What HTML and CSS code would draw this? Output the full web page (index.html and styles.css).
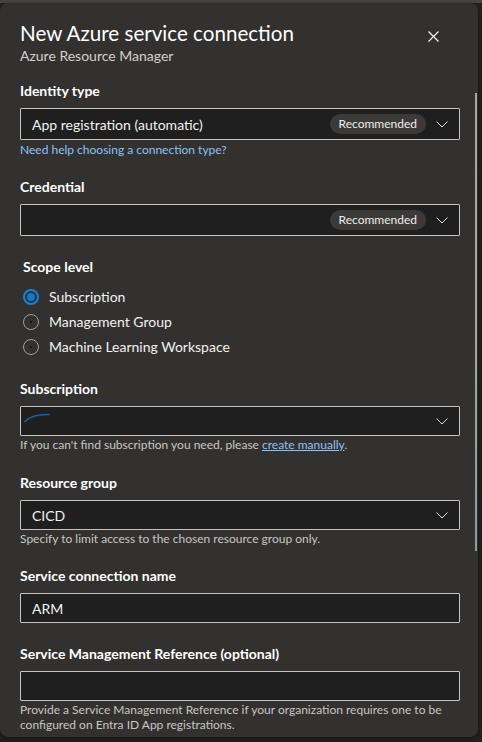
FILE: index.html
```html
<!DOCTYPE html>
<html lang="en">
<head>
<meta charset="utf-8">
<title>New Azure service connection</title>
<link rel="stylesheet" href="styles.css">
</head>
<body>
<div class="top-strip"></div>
<div class="panel">
  <div class="scrollbar"></div>
  <header class="head">
    <div class="head-text">
      <h1 class="title">New Azure service connection</h1>
      <div class="subtitle">Azure Resource Manager</div>
    </div>
    <button class="close" aria-label="Close">
      <svg width="11" height="11" viewBox="0 0 11 11"><path d="M0.5 0.5 L10.5 10.5 M10.5 0.5 L0.5 10.5" stroke="#ffffff" stroke-width="1.1" fill="none"/></svg>
    </button>
  </header>

  <div class="form">
    <div class="field first">
      <div class="label">Identity type</div>
      <div class="select tall">
        <span class="value">App registration (automatic)</span>
        <span class="badge">Recommended</span>
        <svg class="chev" width="12" height="7" viewBox="0 0 12 7"><path d="M0.5 0.5 L6 6 L11.5 0.5" stroke="#e1dfdd" stroke-width="1" fill="none"/></svg>
      </div>
      <a class="help-link" href="#">Need help choosing a connection type?</a>
    </div>

    <div class="field after-help">
      <div class="label">Credential</div>
      <div class="select tall">
        <span class="value"></span>
        <span class="badge">Recommended</span>
        <svg class="chev" width="12" height="7" viewBox="0 0 12 7"><path d="M0.5 0.5 L6 6 L11.5 0.5" stroke="#e1dfdd" stroke-width="1" fill="none"/></svg>
      </div>
    </div>

    <div class="field scope">
      <div class="label scope-label">Scope level</div>
      <div class="radios">
        <div class="radio-row"><span class="radio checked"></span><span class="radio-text">Subscription</span></div>
        <div class="radio-row"><span class="radio"></span><span class="radio-text">Management Group</span></div>
        <div class="radio-row"><span class="radio"></span><span class="radio-text">Machine Learning Workspace</span></div>
      </div>
    </div>

    <div class="field">
      <div class="label">Subscription</div>
      <div class="select loading">
        <svg class="spinner" width="26" height="10" viewBox="0 0 26 10"><path d="M1 8.5 Q8 1 25 1.5" stroke="#1d5f9e" stroke-width="1.6" fill="none" stroke-linecap="round"/></svg>
        <span class="value"></span>
        <svg class="chev" width="12" height="7" viewBox="0 0 12 7"><path d="M0.5 0.5 L6 6 L11.5 0.5" stroke="#e1dfdd" stroke-width="1" fill="none"/></svg>
      </div>
      <div class="helper">If you can't find subscription you need, please <a class="inline-link" href="#">create manually</a>.</div>
    </div>

    <div class="field">
      <div class="label">Resource group</div>
      <div class="select">
        <span class="value">CICD</span>
        <svg class="chev" width="12" height="7" viewBox="0 0 12 7"><path d="M0.5 0.5 L6 6 L11.5 0.5" stroke="#e1dfdd" stroke-width="1" fill="none"/></svg>
      </div>
      <div class="helper">Specify to limit access to the chosen resource group only.</div>
    </div>

    <div class="field after-helper">
      <div class="label">Service connection name</div>
      <div class="input"><span class="value">ARM</span></div>
    </div>

    <div class="field after-input">
      <div class="label">Service Management Reference (optional)</div>
      <div class="input"><span class="value"></span></div>
      <div class="helper multi">Provide a Service Management Reference if your organization requires one to be configured on Entra ID App registrations.</div>
    </div>
  </div>
</div>
</body>
</html>
```

FILE: styles.css
```css
* { box-sizing: border-box; }

html, body {
  margin: 0;
  padding: 0;
}

body {
  background: #232322;
  width: 482px;
  height: 742px;
  overflow: hidden;
  font-family: "Lato", "Noto Sans", sans-serif;
  color: #ffffff;
}

.top-strip {
  height: 3px;
  background: #464646;
}

.panel {
  position: relative;
  width: 478px;
  height: 734px;
  background: #323130;
  border-radius: 8px;
  padding: 16px 18px 0 20px;
  box-shadow: 0 2px 6px rgba(0, 0, 0, 0.45);
}

.scrollbar {
  position: absolute;
  left: 475px;
  top: 90px;
  width: 2px;
  height: 458px;
  background: linear-gradient(#a8a7a6, #a3a3a3 50%, #8b9a9b);
}

.head {
  display: flex;
  justify-content: space-between;
  align-items: flex-start;
}

.title {
  margin: 0;
  font-size: 20.6px;
  line-height: 28px;
  font-weight: 400;
  color: #ffffff;
}

.subtitle {
  font-size: 14px;
  line-height: 18px;
  color: #d2d0ce;
}

.close {
  background: none;
  border: 0;
  padding: 0;
  margin: 12px 21px 0 0;
  width: 11px;
  height: 11px;
  display: flex;
  justify-content: center;
  align-items: center;
  cursor: pointer;
}

.form {
  width: 440px;
}

.field { margin-top: 20px; }
.field.first { margin-top: 16px; }
.field.after-help { margin-top: 19px; }
.field.scope { margin-top: 21px; }
.field.after-helper { margin-top: 19px; }
.field.after-input { margin-top: 21px; }

.label {
  font-size: 14px;
  line-height: 20px;
  font-weight: 700;
  color: #ffffff;
  margin-bottom: 7px;
}

.scope-label { padding-left: 3px; }

.select, .input {
  display: flex;
  align-items: center;
  height: 30px;
  border: 1px solid #c5c3c1;
  border-radius: 1px;
  background: #1f1f1f;
  padding: 0 11px;
}

.select.tall { height: 32px; }
.select.loading { padding-left: 3px; }

.value {
  flex: 1;
  font-size: 14px;
  color: #f3f2f1;
  white-space: nowrap;
  overflow: hidden;
}

.spinner {
  align-self: flex-start;
  margin-top: 6px;
  flex: none;
}

.badge {
  flex: none;
  height: 20px;
  line-height: 20px;
  padding: 0 9px;
  border-radius: 10px;
  background: #3b3a39;
  font-size: 12px;
  color: #eeedec;
  margin-right: 10px;
}

.chev { flex: none; display: block; }

.help-link {
  display: block;
  margin-top: 2px;
  font-size: 12px;
  line-height: 16px;
  color: #8ec2f5;
  text-decoration: none;
}

.helper {
  margin-top: 1px;
  font-size: 12px;
  line-height: 16px;
  color: #c8c6c4;
}

.helper.multi { line-height: 15px; }

.inline-link {
  color: #8ec2f5;
  text-decoration: underline;
}

.radios {
  padding-left: 3px;
}

.radio-row {
  display: flex;
  align-items: center;
  height: 25px;
}

.radio {
  position: relative;
  width: 16px;
  height: 16px;
  border-radius: 50%;
  border: 1px solid #a19f9d;
  margin-right: 10px;
  flex: none;
}

.radio::after {
  content: "";
  position: absolute;
  left: 50%;
  top: 50%;
  width: 2px;
  height: 2px;
  margin: -1px 0 0 -1px;
  border-radius: 50%;
  background: #111111;
}

.radio.checked {
  border: 2px solid #1a80d6;
}

.radio.checked::after {
  width: 8px;
  height: 8px;
  margin: -4px 0 0 -4px;
  background: #0f78d4;
}

.radio-text {
  font-size: 14px;
  color: #f3f2f1;
}
```
